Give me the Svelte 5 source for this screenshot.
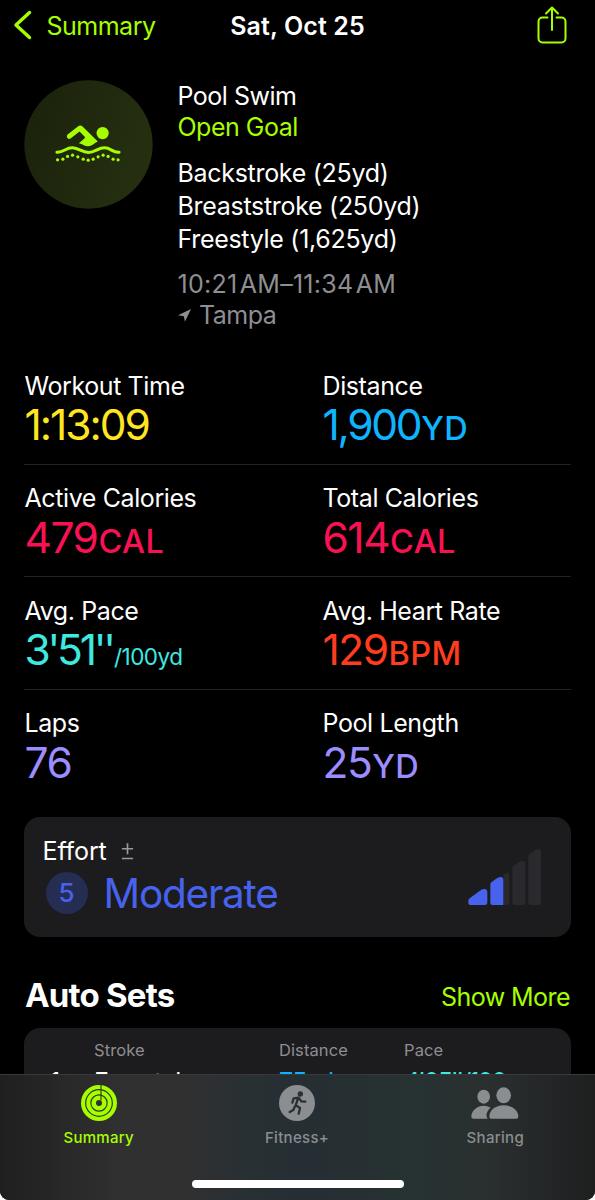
<script lang="ts">
  const strokes = ['Backstroke (25yd)', 'Breaststroke (250yd)', 'Freestyle (1,625yd)']

  const stats = [
    { label: 'Workout Time', value: '1:13:09', unit: '', tone: 'yellow' },
    { label: 'Distance', value: '1,900', unit: 'YD', tone: 'blue' },
    { label: 'Active Calories', value: '479', unit: 'CAL', tone: 'pink' },
    { label: 'Total Calories', value: '614', unit: 'CAL', tone: 'pink' },
    { label: 'Avg. Pace', value: "3'51''", unit: '/100yd', tone: 'teal' },
    { label: 'Avg. Heart Rate', value: '129', unit: 'BPM', tone: 'red' },
    { label: 'Laps', value: '76', unit: '', tone: 'violet' },
    { label: 'Pool Length', value: '25', unit: 'YD', tone: 'violet' },
  ]

  const waveDots = [
    [173, 478], [189, 476], [203, 468], [218, 464], [234, 469], [250, 476], [265, 479],
    [280, 476], [295, 469], [310, 464], [325, 468], [340, 476], [355, 478],
  ]
</script>

<div class="app">
  <main>
    <header class="nav">
      <button class="back">
        <svg class="chevron" viewBox="0 0 20 30" aria-hidden="true">
          <path d="M16.500 2.500 3 15l13.500 12.500" />
        </svg>
        <span>Summary</span>
      </button>
      <h1>Sat, Oct 25</h1>
      <button class="share" aria-label="Share">
        <svg viewBox="0 0 32 40" aria-hidden="true">
          <path d="M11.500 13.500H6.500a4 4 0 0 0-4 4v17a4 4 0 0 0 4 4h19a4 4 0 0 0 4-4v-17a4 4 0 0 0-4-4h-5" />
          <path d="M16 26V3.500M10 9.500l6-6 6 6" />
        </svg>
      </button>
    </header>

    <section class="workout">
      <svg class="badge" viewBox="72 238 388 388" aria-hidden="true">
        <defs>
          <linearGradient id="badge" x1="0" y1="0" x2="1" y2="0.3">
            <stop offset="0" stop-color="#1a210b" />
            <stop offset="1" stop-color="#252f10" />
          </linearGradient>
        </defs>
        <circle cx="266" cy="432" r="193" fill="url(#badge)" />
        <g fill="#a6ff00">
          <circle cx="308.500" cy="397.500" r="18.500" />
          <path d="M203 402l32-25q7-5 13 1l46 45q-8 3-13 8-14 11-29 3-7-4-15-6 9-7 17-14 3-3 0-6l-15-15-27 21q-7 3-10-2-3-6 1-10z" />
          {#each waveDots as [cx, cy]}
            <circle {cx} {cy} r="4.800" />
          {/each}
        </g>
        <path class="wave" d="M171 455c20 2 27-14 47-13s28 14 48 14 28-14 48-14 24 15 44 13" />
      </svg>
      <div class="info">
        <p>Pool Swim</p>
        <p class="goal">Open Goal</p>
        <ul>
          {#each strokes as s}
            <li>{s}</li>
          {/each}
        </ul>
        <p class="when">10:21&#8202;AM–11:34&#8202;AM</p>
        <p class="where">
          <svg viewBox="0 0 14 14" aria-hidden="true"><path d="M14 0 7.500 13.800 6.300 7.800 0 6.800z" /></svg>
          <span>Tampa</span>
        </p>
      </div>
    </section>

    <section class="stats">
      {#each stats as s}
        <div class="stat">
          <div class="label">{s.label}</div>
          <div class="value {s.tone}">{s.value}<span class:small={s.unit.startsWith('/')}>{s.unit}</span></div>
        </div>
      {/each}
    </section>

    <section class="effort">
      <div>
        <div class="effort-head">
          <span>Effort</span>
          <svg viewBox="0 0 14 20" aria-hidden="true"><path d="M1 7h12M7 1v12M1 17.500h12" /></svg>
        </div>
        <div class="effort-level"><span class="score">5</span><span class="name">Moderate</span></div>
      </div>
      <svg class="bars" viewBox="500 144 226 174" aria-hidden="true">
        <path class="off" d="M609 224l10-4q8-2 8 6v83q0 6-6 6h-12zM636 205q0-5 4-8l20-13q15-4 15 8v117q0 6-6 6h-27q-6 0-6-6zM684 170q0-5 4-8l19-13q15-6 15 6v154q0 6-6 6h-26q-6 0-6-6z" />
        <path class="on" d="M504 302q0-4 4-7l35-26q18-6 18 8v31q0 7-7 7h-42q-8 0-8-7zM570 254q0-5 4-8l17-12q18-8 18 6v75h-32q-7 0-7-7z" />
      </svg>
    </section>

    <div class="section-head">
      <h2>Auto Sets</h2>
      <button>Show More</button>
    </div>

    <section class="sets">
      <div class="set-row head"><span></span><span>Stroke</span><span>Distance</span><span>Pace</span></div>
      <div class="set-row">
        <span>1</span><span>Freestyle</span><span class="blue">75yd</span><span class="teal">4'05''/100</span>
      </div>
    </section>
  </main>

  <nav class="tabs">
    <div class="tab-list">
      <button class="active">
        <svg viewBox="0 0 108 108" aria-hidden="true">
          <circle class="fill" cx="54" cy="54" r="54" />
          <circle class="gap" cx="54" cy="54" r="40" />
          <circle class="gap" cx="54" cy="54" r="24.500" />
          <circle class="hole" cx="54" cy="54" r="9" />
          <path class="gap" d="M60 0v46" />
        </svg>
        <span>Summary</span>
      </button>
      <button>
        <svg viewBox="0 0 108 108" aria-hidden="true">
          <circle class="fill" cx="54" cy="54" r="54" />
          <circle class="hole" cx="64" cy="27" r="8" />
          <path class="runner" d="M57 40 50 61M44 40l15-2 8 11 12 1M44 40l-4 13M50 61l13 8-4 17M48 64l-5 11-11 6" />
        </svg>
        <span>Fitness+</span>
      </button>
      <button>
        <svg class="people" viewBox="0 0 144 108" aria-hidden="true">
          <ellipse class="fill" cx="38" cy="35" rx="19" ry="21" />
          <ellipse class="fill" cx="98" cy="31" rx="22" ry="24" />
          <path class="fill" d="M7 101q-6 0-6-6c0-17 16-33 37-33 8 0 15 2 21 6-10 8-17 22-9 33z" />
          <path class="fill" d="M61 101q-6 0-6-6c0-19 18-34 43-34s44 15 44 34q0 6-6 6z" />
        </svg>
        <span>Sharing</span>
      </button>
    </div>
    <div class="home-bar"></div>
  </nav>
</div>

<style>
  :global(body) {
    background: #fff;
  }

  .app {
    display: flex;
    flex-direction: column;
    width: 595px;
    height: 1200px;
    overflow: hidden;
    border-radius: 0 0 9px 9px;
    background: #000;
    color: #fff;
    font-family: Inter, 'Liberation Sans', sans-serif;
    font-size: 25px;
    line-height: 31px;
    white-space: nowrap;
  }

  main {
    flex: none;
    height: 1074px;
    overflow: hidden;
  }

  h1, h2, p, ul {
    margin: 0;
    padding: 0;
    list-style: none;
  }

  button {
    padding: 0;
    border: 0;
    background: none;
    color: #a6ff00;
    font: inherit;
    letter-spacing: inherit;
  }

  svg {
    display: block;
  }

  .nav {
    display: grid;
    grid-template-columns: 1fr auto 1fr;
    align-items: center;
    height: 52px;
    padding: 0 13px;
  }
  .nav h1 {
    font-size: 25px;
    font-weight: 600;
    letter-spacing: 0.1px;
  }
  .back {
    display: flex;
    align-items: center;
    gap: 13.5px;
    letter-spacing: -0.5px;
  }
  .chevron {
    width: 20px;
    height: 30px;
    margin-bottom: 2px;
    fill: none;
    stroke: currentColor;
    stroke-width: 3.4;
    stroke-linecap: round;
    stroke-linejoin: round;
  }
  .share {
    justify-self: end;
    margin: 0 14px 5px 0;
  }
  .share svg {
    width: 32px;
    height: 40px;
    fill: none;
    stroke: currentColor;
    stroke-width: 2;
    stroke-linecap: round;
    stroke-linejoin: round;
  }

  .workout {
    display: flex;
    gap: 24.5px;
    box-sizing: border-box;
    height: 300px;
    padding: 27.5px 24px 0;
  }
  .badge {
    width: 129px;
    height: 129px;
  }
  .wave {
    fill: none;
    stroke: #a6ff00;
    stroke-width: 9;
    stroke-linecap: round;
  }
  .info {
    padding-top: 1px;
    letter-spacing: -0.5px;
  }
  .goal {
    color: #a6ff00;
  }
  .info ul {
    margin: 14px 0 13px;
    line-height: 33.3px;
    letter-spacing: -0.3px;
  }
  .when,
  .where {
    color: #8e8e93;
  }
  .when {
    letter-spacing: 0.25px;
  }
  .where {
    display: flex;
    align-items: center;
    gap: 8.5px;
  }
  .where svg {
    width: 13px;
    height: 13px;
    fill: currentColor;
  }

  .stats {
    display: grid;
    grid-template-columns: 298px 1fr;
    margin: 0 24px;
  }
  .stat {
    box-sizing: border-box;
    height: 112.5px;
    padding: 18.5px 0 0 0.5px;
    border-bottom: 1px solid #232325;
  }
  .stat:nth-last-child(-n + 2) {
    border-bottom: 0;
  }
  .label {
    letter-spacing: -0.4px;
  }
  .value {
    margin-top: -1.5px;
    font-size: 42.5px;
    line-height: 50px;
    letter-spacing: -1.5px;
  }
  .value.yellow {
    letter-spacing: -2px;
  }
  .value.blue {
    letter-spacing: -2.3px;
  }
  .value.teal {
    letter-spacing: -3.2px;
  }
  .value span {
    margin-left: 1px;
    font-size: 32.5px;
    font-weight: 450;
    letter-spacing: 0.4px;
  }
  .value .small {
    font-size: 22.5px;
    font-weight: 400;
    letter-spacing: -0.5px;
  }

  .yellow { color: #ffe620; }
  .blue { color: #0fb4ff; }
  .pink { color: #fa1153; }
  .teal { color: #3ee9e0; }
  .red { color: #ff3c1f; }
  .violet { color: #9d8cff; }

  .effort {
    display: flex;
    justify-content: space-between;
    box-sizing: border-box;
    height: 119.5px;
    margin: 15px 24px 0;
    padding: 19px 29px 0 18.5px;
    border-radius: 16px;
    background: #1c1c1e;
  }
  .effort-head {
    display: flex;
    align-items: center;
    gap: 14px;
    letter-spacing: -0.1px;
  }
  .effort-head svg {
    width: 13px;
    height: 19px;
    fill: none;
    stroke: #98989d;
    stroke-width: 1.8;
  }
  .effort-level {
    display: flex;
    align-items: center;
    gap: 16px;
    margin: 5px 0 0 3px;
    color: #4763ee;
  }
  .score {
    width: 42px;
    border-radius: 50%;
    background: #252d52;
    font-size: 26px;
    font-weight: 500;
    line-height: 42px;
    text-align: center;
  }
  .name {
    font-size: 40.5px;
    letter-spacing: -1.2px;
  }
  .bars {
    width: 75.3px;
    height: 58px;
    margin-top: 11.5px;
  }
  .bars .on { fill: #4763ee; }
  .bars .off { fill: #29292e; }

  .section-head {
    display: flex;
    align-items: center;
    justify-content: space-between;
    height: 40px;
    margin: 38.5px 25px 0;
  }
  .section-head h2 {
    font-size: 33px;
    font-weight: 700;
    letter-spacing: -0.8px;
  }
  .section-head button {
    margin-top: 5px;
    letter-spacing: -0.55px;
  }

  .sets {
    height: 200px;
    margin: 12.5px 24px 0;
    border-radius: 16px;
    background: #1c1c1e;
  }
  .set-row {
    display: grid;
    grid-template-columns: 44px 185px 125px 1fr;
    padding-left: 26px;
    letter-spacing: -1px;
  }
  .set-row.head {
    height: 39px;
    color: #8e8e93;
    font-size: 16.5px;
    line-height: 44px;
    letter-spacing: 0.1px;
  }
  .set-row:last-child span:last-child {
    letter-spacing: -1.9px;
  }

  .tabs {
    display: flex;
    flex: 1;
    flex-direction: column;
    justify-content: space-between;
    align-items: center;
    box-sizing: border-box;
    padding: 10px 0 12px;
    border-top: 1px solid #38393b;
    background: linear-gradient(90deg, #1f1f20, #303031 20%, #303031 32%, #283033 42%, #252e33 50%, #273232 70%, #2a2f2f 82%, #1f1f20);
  }
  .tab-list {
    display: grid;
    grid-template-columns: repeat(3, 198.3px);
    padding-right: 1px;
    font-size: 15px;
    font-weight: 500;
    line-height: 20px;
  }
  .tab-list button {
    display: flex;
    flex-direction: column;
    align-items: center;
    gap: 7px;
    color: #8a8e90;
    letter-spacing: 0.3px;
  }
  .tab-list .active {
    color: #a6ff00;
  }
  .tab-list svg {
    width: 36px;
    height: 36px;
  }
  .tab-list .people {
    width: 48px;
  }
  .fill { fill: currentColor; }
  .hole { fill: #2d2f30; }
  .gap {
    fill: none;
    stroke: #2f3a16;
    stroke-width: 3.5;
  }
  .runner {
    fill: none;
    stroke: #2a2f31;
    stroke-width: 7;
    stroke-linecap: round;
    stroke-linejoin: round;
  }
  .home-bar {
    width: 212px;
    height: 8px;
    border-radius: 4px;
    background: #fff;
  }
</style>
